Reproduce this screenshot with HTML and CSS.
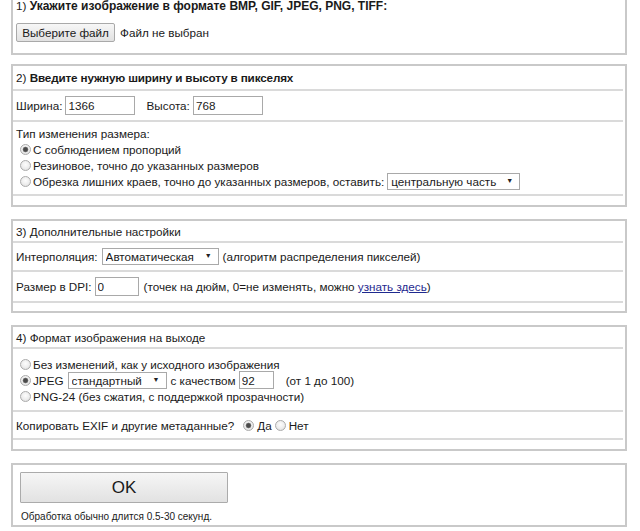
FILE: index.html
```html
<!DOCTYPE html>
<html lang="ru">
<head>
<meta charset="utf-8">
<title>Изменение размера изображения</title>
<link rel="stylesheet" href="styles.css">
</head>
<body>
<form class="page">
  <section class="box box-file">
    <div class="file-title">1) <b class="strong">Укажите изображение в формате BMP, GIF, JPEG, PNG, TIFF:</b></div>
    <div class="file-row">
      <button type="button" class="btn-file">Выберите файл</button>
      <span class="file-none">Файл не выбран</span>
    </div>
  </section>

  <section class="box box-size">
    <div class="row h23">2)&nbsp;<b class="strong strong-ru">Введите нужную ширину и высоту в пикселях</b></div>
    <div class="row h29">
      <span>Ширина:</span>
      <input class="txt w-size ml3" type="text" value="1366">
      <span class="ml11">Высота:</span>
      <input class="txt w-size ml3" type="text" value="768">
    </div>
    <div class="block pad-3-5">
      <div class="line">Тип изменения размера:</div>
      <label class="line opt"><input type="radio" name="mode" class="radio" checked>С соблюдением пропорций</label>
      <label class="line opt"><input type="radio" name="mode" class="radio">Резиновое, точно до указанных размеров</label>
      <label class="line opt"><input type="radio" name="mode" class="radio">Обрезка лишних краев, точно до указанных размеров, оставить:<span class="sel ml3 w-crop"><select><option>центральную часть</option></select></span></label>
    </div>
  </section>

  <section class="box box-extra">
    <div class="row h20">3) Дополнительные настройки</div>
    <div class="row h27">
      <span>Интерполяция:</span>
      <span class="sel ml4 w-interp"><select><option>Автоматическая</option></select></span>
      <span class="ml4">(алгоритм распределения пикселей)</span>
    </div>
    <div class="row h29">
      <span>Размер в DPI:</span>
      <input class="txt w-dpi ml3" type="text" value="0">
      <span class="ml5">(точек на дюйм, 0=не изменять, можно <a href="#" class="link">узнать здесь</a>)</span>
    </div>
  </section>

  <section class="box box-format">
    <div class="row h20">4) Формат изображения на выходе</div>
    <div class="block pad-7-6">
      <label class="line opt"><input type="radio" name="fmt" class="radio">Без изменений, как у исходного изображения</label>
      <label class="line opt"><input type="radio" name="fmt" class="radio" checked>JPEG<span class="sel ml4 w-jpeg"><select><option>стандартный</option></select></span><span class="ml4">с качеством</span><input class="txt w-q ml3" type="text" value="92"><span class="ml12">(от 1 до 100)</span></label>
      <label class="line opt"><input type="radio" name="fmt" class="radio">PNG-24 (без сжатия, с поддержкой прозрачности)</label>
    </div>
    <div class="row h26">
      <span>Копировать EXIF и другие метаданные?</span>
      <label class="exif ml9"><input type="radio" name="exif" class="radio" checked>Да</label>
      <label class="exif ml3"><input type="radio" name="exif" class="radio">Нет</label>
    </div>
  </section>

  <section class="box box-submit">
    <button type="button" class="btn-ok">OK</button>
    <div class="hint">Обработка обычно длится 0.5-30 секунд.</div>
  </section>
</form>
</body>
</html>
```

FILE: styles.css
```css
* { box-sizing: border-box; }

html, body {
  margin: 0;
  padding: 0;
  background: #ffffff;
}

body {
  font-family: "Liberation Sans", Arial, sans-serif;
  font-size: 11.7px;
  color: #1a1a1a;
  overflow: hidden;
}

.strong {
  font-weight: bold;
  font-size: 12px;
}
.strong-ru {
  font-size: 11.7px;
  letter-spacing: -0.15px;
}

.page {
  padding-left: 11px;
  width: 627px;
}

.box {
  width: 616px;
  border: 2px solid #c9c9c9;
  padding: 0 2px 0 0;
  background: #fff;
  margin-bottom: 12px;
}

/* box 1 */
.box-file {
  margin-top: -7px;
  margin-bottom: 9px;
  padding-left: 3px;
  padding-bottom: 11px;
}
.file-title {
  height: 21px;
  display: flex;
  align-items: center;
  white-space: pre;
}
.file-row {
  margin-top: 7px;
  height: 19px;
  display: flex;
  align-items: center;
}
.btn-file {
  height: 19px;
  width: 99px;
  padding: 0;
  font: 11.7px "Liberation Sans", Arial, sans-serif;
  color: #1a1a1a;
  border: 1px solid #a9a9a9;
  border-radius: 2px;
  background: linear-gradient(#f7f7f7, #e1e1e1);
}
.file-none { margin-left: 5px; }

/* rows */
.row {
  display: flex;
  align-items: center;
  padding-left: 3px;
  border-bottom: 2px solid #dadada;
  white-space: nowrap;
}
.h20 { height: 22px; }
.h23 { height: 25px; }
.h26 { height: 28px; }
.h27 { height: 29px; }
.h29 { height: 31px; }

.block {
  border-bottom: 2px solid #dadada;
  padding-left: 3px;
}
.pad-3-5 { padding-top: 3px; padding-bottom: 5px; }
.pad-7-6 { padding-top: 7px; padding-bottom: 6px; }

.line {
  display: flex;
  align-items: center;
  height: 16px;
  white-space: nowrap;
}

.box-size, .box-extra, .box-format { padding-bottom: 9px; }
.box-extra { padding-bottom: 8px; }

/* spacing helpers */
.ml3 { margin-left: 3px; }
.ml4 { margin-left: 4px; }
.ml5 { margin-left: 5px; }
.ml9 { margin-left: 9px; }
.ml11 { margin-left: 11px; }
.ml12 { margin-left: 12px; }

/* text inputs */
.txt {
  height: 19px;
  font: 11.7px "Liberation Sans", Arial, sans-serif;
  color: #1a1a1a;
  border: 1px solid #a9a9a9;
  padding: 0 2px;
  background: #fff;
  outline: none;
}
.w-size { width: 70px; }
.w-dpi { width: 44px; }
.w-q { width: 35px; height: 18px; }

/* selects */
.sel {
  position: relative;
  display: inline-block;
  height: 17px;
}
.sel select {
  -webkit-appearance: none;
  appearance: none;
  width: 100%;
  height: 17px;
  border: 1px solid #a9a9a9;
  border-radius: 0;
  background: #fff;
  font: 11.7px "Liberation Sans", Arial, sans-serif;
  color: #1a1a1a;
  padding: 0 14px 0 3px;
  line-height: 15px;
}
.sel::after {
  content: "▼";
  position: absolute;
  right: 7px;
  top: 4px;
  font-size: 7px;
  line-height: 8px;
  color: #222;
  pointer-events: none;
}
.w-crop { width: 133px; }
.w-interp { width: 117px; }
.w-jpeg { width: 99px; }

/* radios */
.radio {
  -webkit-appearance: none;
  appearance: none;
  width: 11px;
  height: 11px;
  margin: 0 2px 0 4px;
  border: 1px solid #ababab;
  border-radius: 50%;
  background: radial-gradient(circle at 50% 40%, #fdfdfd 0, #ededed 55%, #d6d6d6 100%);
  flex: none;
}
.radio:checked {
  background:
    radial-gradient(circle, #4a4a4a 0, #4a4a4a 1.8px, #8a8a8a 2.6px, rgba(0,0,0,0) 3.2px),
    radial-gradient(circle at 50% 40%, #fdfdfd 0, #ededed 55%, #d6d6d6 100%);
}
.exif {
  display: flex;
  align-items: center;
}
.exif .radio { margin-left: 0; margin-right: 3px; }

.link {
  color: #1f2a8f;
  text-decoration: underline;
}

/* submit box */
.box-submit {
  padding: 7px 2px 2px 7px;
}
.btn-ok {
  display: block;
  width: 208px;
  height: 31px;
  padding: 0;
  font: 17px "Liberation Sans", Arial, sans-serif;
  color: #1a1a1a;
  border: 1px solid #ababab;
  border-radius: 1px;
  background: linear-gradient(#f6f6f6, #e2e2e2);
}
.hint {
  margin-top: 7px;
  height: 13px;
  line-height: 13px;
  font-size: 10px;
  padding-left: 1px;
}
```
